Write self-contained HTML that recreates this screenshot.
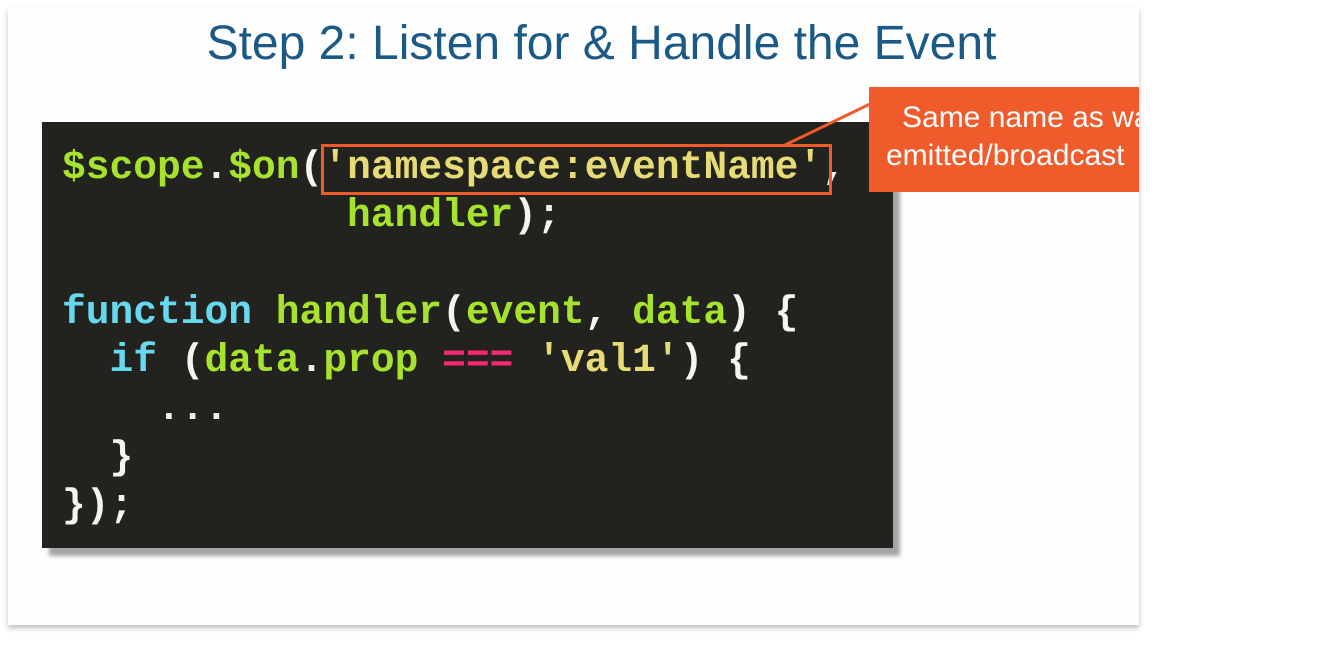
<!DOCTYPE html>
<html><head><meta charset="utf-8"><style>
body{margin:0;width:1330px;height:672px;background:#fff;position:relative;overflow:hidden;font-family:"Liberation Sans",sans-serif}
.slide{position:absolute;left:8px;top:8px;width:1131px;height:617px;background:#fefefe;box-shadow:0 3px 5px rgba(0,0,0,.25)}
.title{position:absolute;left:0;top:16px;width:1203px;text-align:center;font-size:48px;color:#1b5a86;white-space:nowrap}
.code{position:absolute;left:42px;top:122px;width:851px;height:426px;background:#22221e;box-shadow:7px 8px 4px rgba(0,0,0,.35)}
pre{position:absolute;left:62px;top:144px;margin:0;font-family:"Liberation Mono",monospace;font-weight:bold;font-size:39.6px;line-height:48.3px;color:#f4f4f0}
.g{color:#a6e22e}.c{color:#66d9ef}.y{color:#e6db74}.p{color:#f92672}
.hl{position:absolute;left:321px;top:144px;width:505px;height:45px;border:3px solid #ef5b2b}
.call{position:absolute;left:869px;top:87px;width:270px;height:105px;background:#ef5b2b;color:#fff;font-size:30px;line-height:38px;overflow:hidden;white-space:nowrap}
</style></head><body>
<div class="slide"></div>
<div class="title">Step 2: Listen for &amp; Handle the Event</div>
<div class="code"></div>
<pre><span class="g">$scope</span>.<span class="g">$on</span>(<span class="y">'namespace:eventName'</span>,
            <span class="g">handler</span>);

<span class="c">function</span> <span class="g">handler</span>(<span class="g">event</span>, <span class="g">data</span>) {
  <span class="c">if</span> (<span class="g">data</span>.<span class="g">prop</span> <span class="p">===</span> <span class="y">'val1'</span>) {
    ...
  }
});</pre>
<div class="hl"></div>
<svg style="position:absolute;left:0;top:0" width="1330" height="672"><line x1="785" y1="145" x2="870" y2="104" stroke="#ef5b2b" stroke-width="3"/></svg>
<div class="call"><div style="position:absolute;left:33px;top:12px">Same name as was</div><div style="position:absolute;left:17px;top:50px">emitted/broadcast</div></div>
</body></html>
